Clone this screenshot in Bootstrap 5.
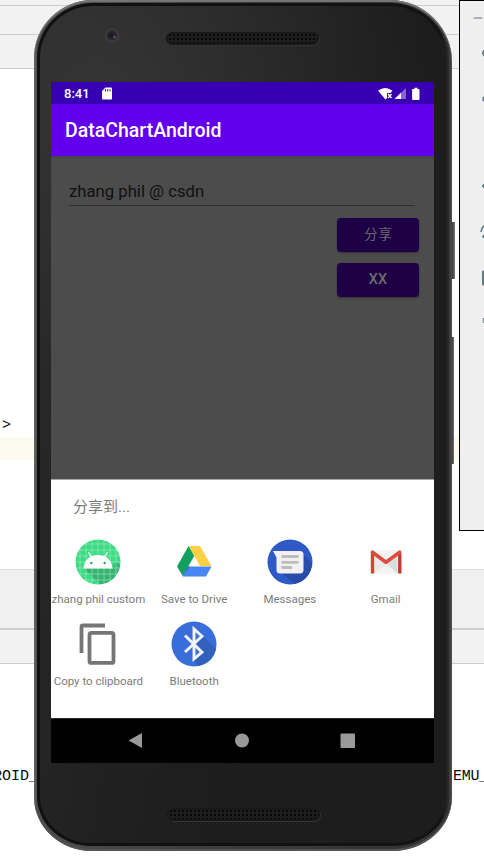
<!DOCTYPE html>
<html lang="zh">
<head>
<meta charset="utf-8">
<meta name="viewport" content="width=device-width, initial-scale=1">
<title>DataChartAndroid</title>
<link href="https://cdn.jsdelivr.net/npm/bootstrap@5.3.0/dist/css/bootstrap.min.css" rel="stylesheet">
<style>
body{width:484px;height:863px;font-family:Roboto,"Noto Sans CJK SC",sans-serif;line-height:1}
svg{display:block}
/* editor behind the emulator */
.band{flex:none;background:#f2f2f2;border-bottom:1px solid #cdcdcd}
.editor{font:15px/18px "Liberation Mono",monospace;color:#080808}
.b1{height:6px}.b2{height:29px}.b3{height:34px}
.code{height:368px}
.caret-row{height:23px;background:#fcfaed}
.gap-rows{height:109px}
.b4{height:61px;border-top:1px solid #dedede;border-bottom:2px solid #cfcfcf;background:#f0f0f0}
.b5{height:34px}
.console{padding-top:104px}
.code-end{padding:348px 0 0 2px}
.left-run{width:34px;direction:rtl}
.left-run span{direction:ltr;unicode-bidi:embed;margin-right:-4px}
.right-run{width:31px;letter-spacing:-.3px}
/* phone */
.phone{left:34px;top:0;width:418px;height:851px;border-radius:59px 62px 60px 58px / 58px 62px 54px 54px;background:linear-gradient(90deg,#686868 0,#4d4d4d 3px,#3a3a3a 50%,#343233 99%,#4a4a4a);padding:3px 3px 5px;box-shadow:inset 0 2px 1px #777,inset 0 -2px 1px #555}
.rim{background:linear-gradient(90deg,#101010 0 3px,#111 50%,#141313 98%,#2c2a2a);border-radius:56px 59px 56px 54px / 55px 59px 50px 50px;padding:3px}
.face{background:radial-gradient(ellipse 330px 300px at 15% 10%,#343434,#30303000),linear-gradient(100deg,#2b2b2b,#202020 38%,#1d1d1d 60%);border-radius:53px 56px 53px 51px / 52px 56px 47px 47px;padding:0 11px}
.top-bezel{height:76px;padding:22px 0 0 53px}
.lens{width:16px;height:16px;margin-right:46px}
.grille{width:153px;height:13px;border-radius:7px;background:radial-gradient(circle,#090909 .8px,#1d1d1d 1.3px) 2px 1px/4px 4px;box-shadow:inset 0 0 0 1.5px #191919,1px 1px 0 #333}
.top-bezel .grille{margin-top:7px;margin-top:4px}
.bottom-bezel{padding-top:45px}
.side-key{background:linear-gradient(90deg,#393637,#5e5c5d 60%,#777)}
.k1{left:452px;top:222px;width:3px;height:57px}
.k2{left:452px;top:337px;width:2px;height:127px}
/* app screen */
.screen{width:383px;height:681px;background:#4c4c4c}
.status{height:22px;background:#3700b3;padding:1px 14px 0 13px;font-size:13px;font-weight:500}
.appbar{height:52px;background:#6200ee;padding:2px 0 0 14px;font-size:19.5px;font-weight:500}
.form-area{height:323px;padding:20px 15px 0;box-shadow:inset 0 2px 1px #464646}
.field{width:346px;height:30px;margin-left:3px;padding-top:7px;font-size:16.7px;line-height:18px;color:#101010;border-bottom:1px solid #303030}
.dim-btn{width:82px;height:34px;border-radius:4px;background:#1e0047;color:#6f6b68;font-size:13.3px;letter-spacing:1px;box-shadow:0 1px 2px #333;padding-left:1px}
.share-btn{margin-top:12px;margin-bottom:11px}
.xx-btn{font-size:14.5px;font-weight:500;letter-spacing:.2px;padding:1px 0 0}
.sheet{height:239px;border-top:1px solid #a5a5a5;padding-top:18px}
.sheet-title{font-size:15px;line-height:18px;color:#7b7b7b;padding-left:22px}
.targets{padding-top:23px}
.target{width:25%;height:82px;font-size:11.5px;color:#7b7b7b;white-space:nowrap;padding-right:1px}
.target svg{width:46px;height:46px;margin-bottom:8px}
.target span{line-height:13px}
.sysnav{height:45px;background:#000;border-top:1px solid #292929}
/* emulator tools */
.tools{left:459px;top:0;width:30px;height:531px;background:#efefef;border:1px solid #000}
</style>
</head>
<body class="bg-white position-relative overflow-hidden m-0">
<div class="editor d-flex flex-column h-100">
  <div class="band b1"></div><div class="band b2"></div><div class="band b3"></div>
  <div class="code code-end"><span>&gt;</span></div>
  <div class="caret-row"></div><div class="gap-rows"></div>
  <div class="band b4"></div><div class="band b5"></div>
  <div class="console d-flex justify-content-between">
    <div class="left-run overflow-hidden text-nowrap"><span>ROID_</span></div>
    <div class="right-run text-nowrap">EMU_</div>
  </div>
</div>

<div class="side-key k1 position-absolute"></div>
<div class="side-key k2 position-absolute"></div>
<div class="phone position-absolute">
 <div class="rim h-100"><div class="face h-100">
  <div class="top-bezel d-flex align-items-start">
    <svg class="lens" viewBox="0 0 16 16"><circle cx="8" cy="7.500" r="7.500" fill="#3a3a3a"/><circle cx="8" cy="7.500" r="5" fill="#27262a"/><circle cx="7" cy="7" r="2.500" fill="#1b1b26"/><circle cx="10.500" cy="9" r="1.200" fill="#72535a"/></svg>
    <div class="grille"></div>
  </div>
  <main class="screen overflow-hidden">
    <div class="status d-flex align-items-center text-white">
      <span>8:41</span>
      <svg width="34" height="13" viewBox="1 0 34 13"><path d="M16.500.5H22q1 0 1 1v10q0 1-1 1h-8q-1 0-1-1V4z" fill="#fff"/><path d="M16.500 2v2.500M18.700 2v2.500M21 2v2.500" stroke="#3700b3" stroke-width=".9"/></svg>
      <svg class="ms-auto" width="42" height="14" viewBox="0 0 42 14"><path d="M0 3.800Q7-1.800 14.500 3.800L12.500 6H9v5L7.500 12.500z" fill="#fff"/><path d="M10 7l3.500 4M13.500 7L10 11" stroke="#fff" stroke-width="1.300"/><path d="M16.500 12L28 1v11z" fill="#8a63d4"/><path d="M16.500 12L23 5.700V12z" fill="#fff"/><path d="M34.500 2H36.500V.7h3V2h1.300q.7 0 .7.700v9.600q0 .7-.7.700h-6q-.7 0-.7-.7V2.500z" fill="#fff"/></svg>
    </div>
    <div class="appbar d-flex align-items-center text-white">DataChartAndroid</div>
    <div class="form-area">
      <div class="field">zhang phil @ csdn</div>
      <div class="d-flex flex-column align-items-end">
        <div class="dim-btn share-btn d-flex justify-content-center align-items-center">分享</div>
        <div class="dim-btn xx-btn d-flex justify-content-center align-items-center">XX</div>
      </div>
    </div>
    <section class="sheet bg-white">
      <div class="sheet-title">分享到...</div>
      <div class="targets d-flex flex-wrap">
        <div class="target d-flex flex-column align-items-center">
          <svg viewBox="0 0 46 46"><defs><clipPath id="disc"><circle cx="23" cy="23" r="22.500"/></clipPath></defs><g clip-path="url(#disc)"><path fill="#3ddc84" d="M0 0h46v46H0z"/><path d="M8.500 29l18 18H46V27l-5-5-4 7z" fill="#36b370"/><path d="M5 0v46M11 0v46M17 0v46M23 0v46M29 0v46M35 0v46M41 0v46M0 5h46M0 11h46M0 17h46M0 23h46M0 29h46M0 35h46M0 41h46" stroke="#a5efc6" stroke-width=".6"/></g><path d="M8.500 29.500C9 21 15 16 23 16s14 5 14.500 13.500z" fill="#fff"/><path d="M16.500 18.500L13.500 13M29.500 18.500l3-5.500" stroke="#fff" stroke-width="1.200"/><circle cx="16.300" cy="24" r="1.300" fill="#3aa76d"/><circle cx="29.700" cy="24" r="1.300" fill="#3aa76d"/></svg>
          <span>zhang phil custom</span></div>
        <div class="target d-flex flex-column align-items-center">
          <svg viewBox="0 0 46 46"><path d="M17.500 7h11.500L40.500 27H29z" fill="#ffcf48"/><path d="M17.500 7L23.300 17 11.700 37 6 27.500z" fill="#11a05d"/><path d="M17 27.500h23.500L35 37.500H11.500z" fill="#4687f4"/><path d="M11.500 37.500l5.500-10h2z" fill="#3468c4"/></svg>
          <span>Save to Drive</span></div>
        <div class="target d-flex flex-column align-items-center">
          <svg viewBox="0 0 46 46"><circle cx="23" cy="23" r="22.500" fill="#3059c8"/><path d="M36 15l9 9q-1 16-17 21L12 32z" fill="#274caa"/><path d="M6 12h27q3.500 0 3.500 3.500V31q0 3.500-3.500 3.500H13Q9.500 34.500 9.500 31V18.500z" fill="#f1f1f1"/><path d="M15.500 17.500h15M15.500 23.300h15M15.500 28.500h8.500" stroke="#bdbdbd" stroke-width="2.800" stroke-linecap="round"/></svg>
          <span>Messages</span></div>
        <div class="target d-flex flex-column align-items-center">
          <svg viewBox="0 0 46 46"><path d="M9.500 11.500h27v23h-27z" fill="#eaeaea"/><path d="M11 34.500L23 26l12 8.500z" fill="#f4f4f4"/><path d="M11 11.500h24L23 22z" fill="#f3f3f3"/><path d="M25 25l9-7v16.500z" fill="#dcdcdc"/><path d="M9.500 34.500V14.500" stroke="#d74335" stroke-width="3.400"/><path d="M36.800 34.500V14.500" stroke="#c43a2e" stroke-width="3.400"/><path d="M9.400 13.300L23 23.200 36.700 13.300" fill="none" stroke="#df4b3f" stroke-width="3.700" stroke-linecap="round" stroke-linejoin="round"/></svg>
          <span>Gmail</span></div>
        <div class="target d-flex flex-column align-items-center">
          <svg viewBox="0 0 46 46"><path d="M6.500 32V6q0-1.500 1.500-1.500h22" fill="none" stroke="#757575" stroke-width="3.800"/><rect x="14.500" y="11.900" width="24" height="30" rx="2" fill="none" stroke="#757575" stroke-width="3.800"/></svg>
          <span>Copy to clipboard</span></div>
        <div class="target d-flex flex-column align-items-center">
          <svg viewBox="0 0 46 46"><circle cx="23" cy="23" r="22.500" fill="#386ddb"/><path d="M31 14l14 14q-3 14-18 17L23 39l8-9-6-7z" fill="#3260bd"/><path d="M14 14.500l17 16.700-8 6.600V8l8 7.200L14 31" fill="none" stroke="#f5f5f5" stroke-width="2.900"/></svg>
          <span>Bluetooth</span></div>
      </div>
    </section>
    <nav class="sysnav"><svg width="383" height="44" viewBox="0 0 383 44" fill="#999"><path d="M77.500 21.500L91 14v15z"/><circle cx="191" cy="21.500" r="7"/><rect x="289.500" y="14.500" width="14.500" height="14.500" rx="1"/></svg></nav>
  </main>
  <div class="bottom-bezel d-flex justify-content-center"><div class="grille"></div></div>
 </div></div>
</div>

<aside class="tools position-absolute"><svg width="24" height="400" viewBox="460 1 24 400" stroke="#5f7f88" fill="#5f7f88"><path d="M474.500 18h7" stroke="#a3b3b8" stroke-width="2" stroke-linecap="round"/><circle cx="486" cy="53" r="3.500"/><path d="M483 97h3v4h-3zM482 186l4-4v8z"/><path d="M481 232q1-6 5-7" fill="none" stroke-width="1.500"/><path d="M482 236.500l3-2v4z"/><path d="M482.500 271h3v14h-3z"/><path d="M483.500 318q-1 3 0 5" fill="none"/></svg></aside>
</body>
</html>
